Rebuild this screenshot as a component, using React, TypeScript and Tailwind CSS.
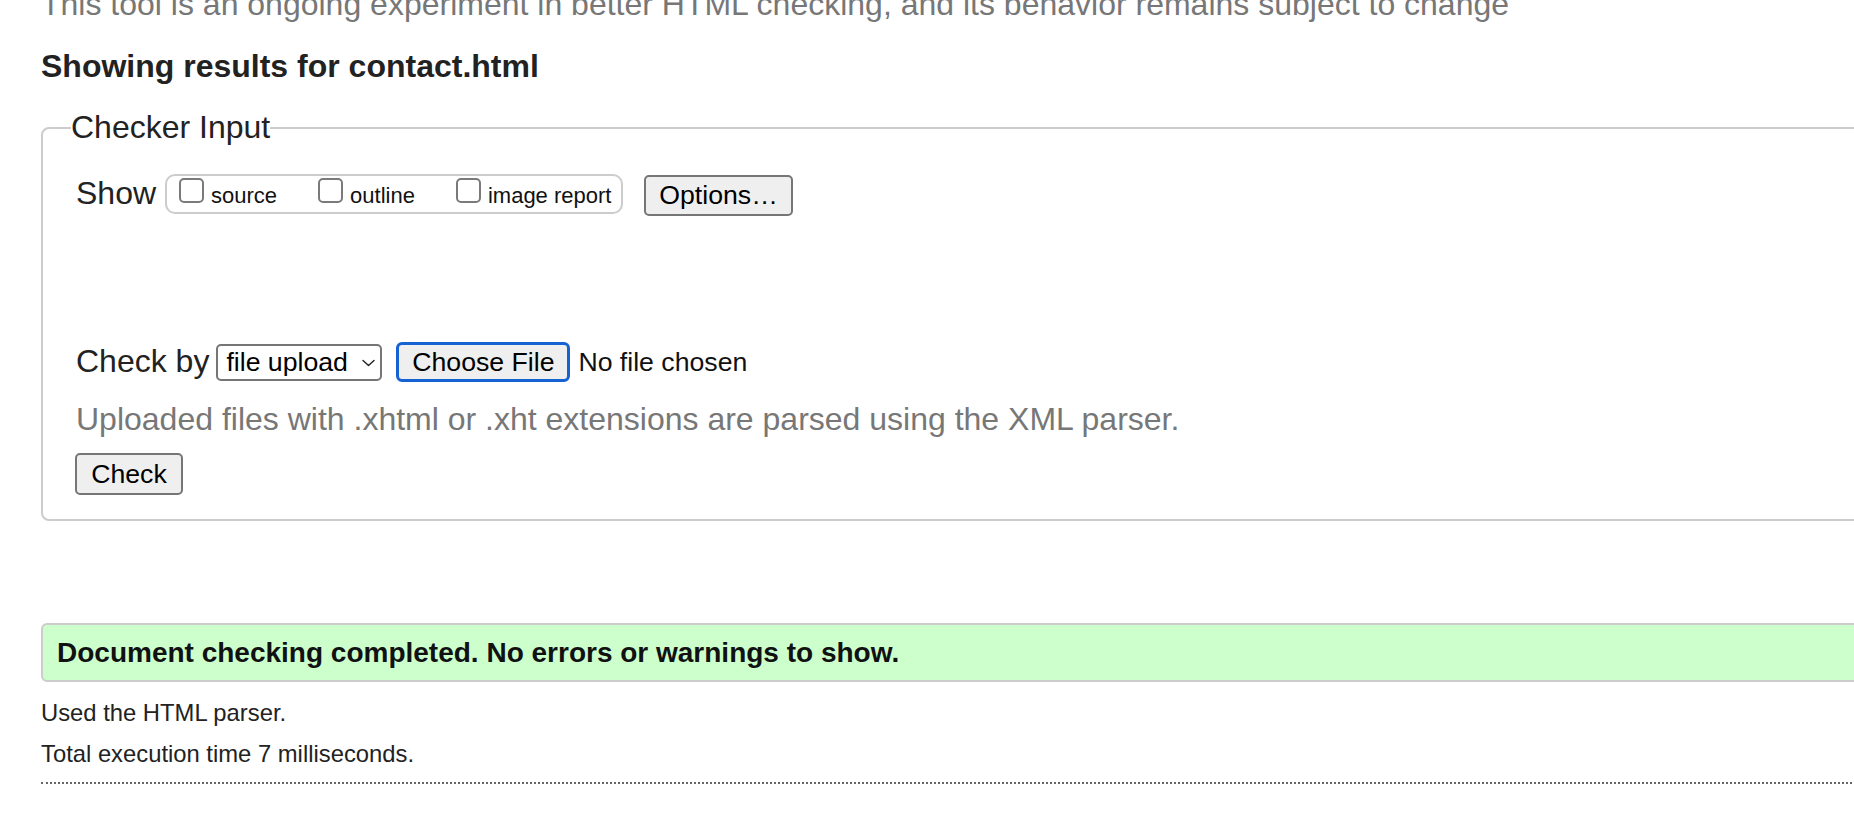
import React from 'react';

interface CheckOptionProps {
  label: string;
  first?: boolean;
}

// mac-style unchecked checkbox with its small label
function CheckOption({ label, first }: CheckOptionProps) {
  return (
    <label className={`flex items-start ${first ? '' : 'ml-[41px]'}`}>
      <span className="block h-[25px] w-[25px] rounded-[5px] border-2 border-[#7a7a7a] bg-white" />
      <span className="ml-[7px] mt-[5px] text-[22px] leading-[25px] text-[#111]">{label}</span>
    </label>
  );
}

function Chevron() {
  return (
    <svg className="ml-auto mr-[5px]" width="13" height="8" viewBox="0 0 13 8" fill="none">
      <path d="M1 1.5L6.5 6.5L12 1.5" stroke="#222" strokeWidth="1.4" strokeLinecap="round" strokeLinejoin="round" />
    </svg>
  );
}

export default function App() {
  return (
    <div className="h-[828px] w-full overflow-hidden bg-white font-['Liberation_Sans',Arial,sans-serif] text-[#222]">
      <div className="w-[1900px] pl-[41px]">
        <p className="mt-[-14px] text-[32px] leading-[37px] text-[#777]">
          This tool is an ongoing experiment in better HTML checking, and its behavior remains subject to change
        </p>

        <h2 className="mt-[25px] text-[32px] font-bold leading-[37px] text-[#222]">
          Showing results for contact.html
        </h2>

        <fieldset className="mt-[24px] rounded-[8px] border-2 border-[#ccc] pb-[24px] pl-[28px]">
          <legend className="text-[32px] leading-[37px] text-[#222]">Checker Input</legend>

          <div className="pl-[5px]">
            {/* Show row */}
            <div className="mt-[28px] flex items-start">
              <span className="mt-px text-[32px] leading-[37px]">Show</span>
              <div className="ml-[9px] flex h-[40px] w-[458px] items-start rounded-[10px] border-2 border-[#ccc] pl-[12px] pt-[2px]">
                <CheckOption label="source" first />
                <CheckOption label="outline" />
                <CheckOption label="image report" />
              </div>
              <button className="ml-[21px] mt-px flex h-[41px] w-[149px] items-center justify-center rounded-[5px] border-2 border-[#767676] bg-[#efefef] text-[26.67px] leading-none text-black">
                Options…
              </button>
            </div>

            {/* Check by row */}
            <div className="mt-[126px] flex items-start">
              <span className="mt-px text-[32px] leading-[37px]">Check by</span>
              <div className="ml-[7px] mt-[2px] flex h-[37px] w-[166px] items-center rounded-[5px] border-2 border-[#767676] bg-white pl-[8px]">
                <span className="text-[26.67px] leading-none text-black">file upload</span>
                <Chevron />
              </div>
              <button className="ml-[14px] flex h-[40px] w-[174px] items-center justify-center rounded-[6px] border-[3px] border-[#1662d3] bg-[#efefef] text-[26.67px] leading-none text-black">
                Choose File
              </button>
              <span className="ml-[8px] text-[26.67px] leading-[40px] text-[#111]">No file chosen</span>
            </div>

            <p className="mt-[19px] text-[32px] leading-[37px] text-[#777]">
              Uploaded files with .xhtml or .xht extensions are parsed using the XML parser.
            </p>

            <button className="ml-[-1px] mt-[15px] flex h-[42px] w-[108px] items-center justify-center rounded-[5px] border-2 border-[#767676] bg-[#efefef] text-[26.67px] leading-none text-black">
              Check
            </button>
          </div>
        </fieldset>

        <div className="mt-[102px] flex h-[59px] items-center rounded-l-[6px] border-2 border-[#ccc] bg-[#ccffcc] pl-[14px] text-[28px] font-bold leading-none text-[#111]">
          Document checking completed. No errors or warnings to show.
        </div>

        <p className="mt-[17px] text-[23.8px] leading-[27px] text-[#222]">Used the HTML parser.</p>
        <p className="mt-[14px] text-[23.8px] leading-[27px] text-[#222]">Total execution time 7 milliseconds.</p>

        <div className="mt-[15px] border-t-2 border-dotted border-[#666]" />
      </div>
    </div>
  );
}
